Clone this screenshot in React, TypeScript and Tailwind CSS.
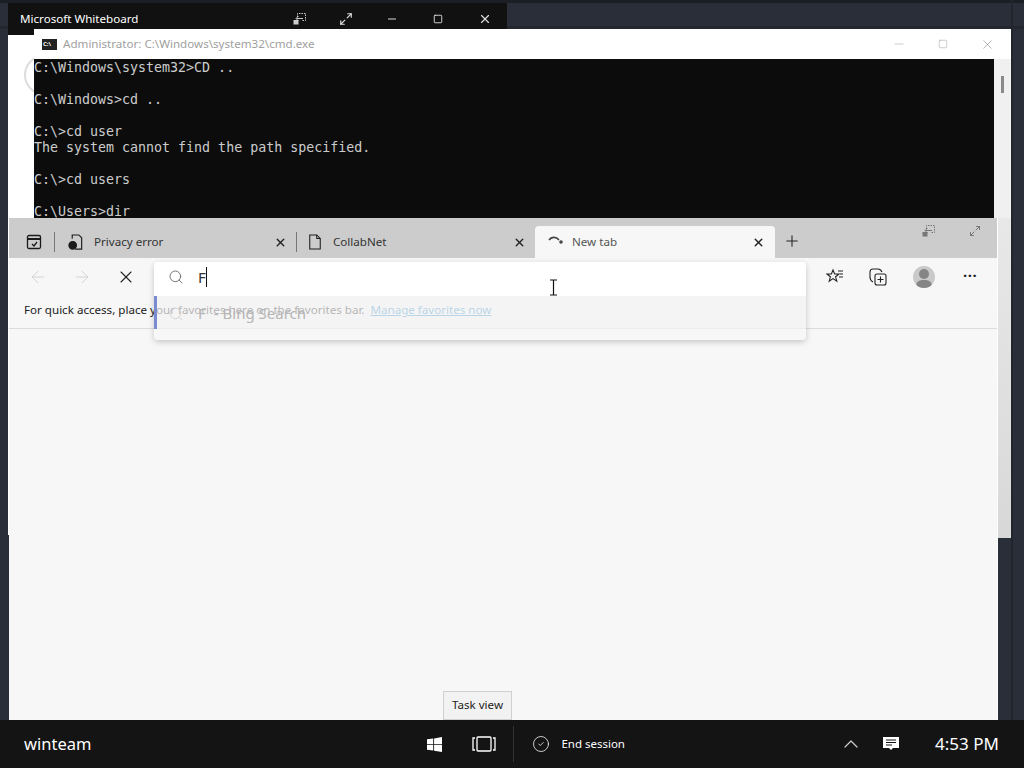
import { ArrowLeft, ArrowRight, ChevronUp, CircleCheck, Maximize2, Minus, Plus, Search, Square, X } from "lucide-react";

const uiFont = { fontFamily: '"Noto Sans", "Open Sans", sans-serif' };

const consoleLines = [
  "C:\\Windows\\system32>CD ..",
  "",
  "C:\\Windows>cd ..",
  "",
  "C:\\>cd user",
  "The system cannot find the path specified.",
  "",
  "C:\\>cd users",
  "",
  "C:\\Users>dir",
];

// little "restore to pinned" glyph used by the remote session bars
function PinBar({ className }: { className?: string }) {
  return (
    <svg viewBox="0 0 14 14" width="14" height="14" fill="none" stroke="currentColor" className={className}>
      <path d="M4.5 5V1.5h8v7H9" strokeDasharray="1.5 1" />
      <path d="M10 6.5H3.5M5.5 4 3 6.5 5.5 9" />
      <rect x="1" y="8.5" width="4" height="3.5" fill="currentColor" />
    </svg>
  );
}

function DocIcon() {
  return (
    <svg viewBox="0 0 16 18" width="14" height="16" fill="none" stroke="#1a1a1a" strokeWidth="1.2">
      <path d="M2 1h8l4 4v12H2z" />
      <path d="M10 1v4h4" />
    </svg>
  );
}

function Tab({ title, icon, width, iconWidth }: { title: string; icon: React.ReactNode; width: string; iconWidth: string }) {
  return (
    <div className={`flex h-[32px] items-center ${width}`}>
      <span className={`flex justify-center ${iconWidth}`}>{icon}</span>
      <span className="text-[11.6px] text-[#333]">{title}</span>
      <X size={13} strokeWidth={2.6} className="ml-auto mr-[9px] text-[#222]" />
    </div>
  );
}

export default function App() {
  return (
    <div className="flex h-[768px] w-[1024px] flex-col overflow-hidden bg-[#2a2e38]" style={uiFont}>
      <div className="relative flex-1">
        <div className="absolute inset-x-0 top-0 h-[3px] bg-[#1c1e26]" />
        <div className="absolute inset-x-0 top-[26px] h-[3px] bg-[#24272f]" />
        <div className="absolute bottom-0 right-[11px] top-0 w-[2px] bg-[#22252c]" />

        {/* Whiteboard window, mostly hidden */}
        <div className="absolute left-[8px] top-[3px] h-[532px] w-[499px] bg-white">
          <div className="flex h-[32px] items-center bg-[#111] text-white">
            <span className="ml-[12px] text-[11.6px]">Microsoft Whiteboard</span>
            <PinBar className="ml-[155px] text-[#ccc]" />
            <Maximize2 size={14} className="ml-[32px] text-[#ddd]" />
            <Minus size={12} className="ml-[33px] text-[#ddd]" />
            <Square size={10} className="ml-[35px] text-[#eee]" />
            <X size={14} className="ml-[35px] text-[#ddd]" />
          </div>
          <div className="ml-[16px] mt-[20px] size-[40px] rounded-full border-2 border-[#ddd]" />
        </div>

        {/* cmd.exe */}
        <div className="absolute left-[34px] top-[29px] h-[509px] w-[977px] bg-linear-to-b from-[#f2f2f2] to-[#d8d8d8]">
          <div className="flex h-[30px] items-center bg-white">
            <span className="ml-[8px] flex h-[11px] w-[15px] items-center bg-[#222] pl-[1px] text-[6px] font-bold leading-none text-white">C:\</span>
            <span className="ml-[6px] text-[11.6px] text-[#a0a0a0]">Administrator: C:\Windows\system32\cmd.exe</span>
            <Minus size={14} strokeWidth={1} className="ml-auto text-[#aaa]" />
            <Square size={10} strokeWidth={1} className="ml-[32px] text-[#888]" />
            <X size={15} strokeWidth={1} className="ml-[32px] mr-[16px] text-[#888]" />
          </div>
          <div className="flex h-[159px]">
            <pre className="w-[960px] overflow-hidden bg-[#0c0c0c] pt-px text-[13.3px] leading-[16px] text-[#cccccc]" style={{ fontFamily: '"DejaVu Sans Mono", monospace' }}>
              {consoleLines.join("\n")}
            </pre>
            <div className="flex w-[17px] justify-center bg-[#f0f0f0] pt-[17px]">
              <div className="h-[17px] w-[3px] bg-[#8a8a8a]" />
            </div>
          </div>
        </div>

        {/* Edge */}
        <div className="absolute left-[9px] top-[218px] flex h-[502px] w-[989px] flex-col border-r border-white bg-[#f7f7f7]">
          <div className="flex h-[40px] items-end bg-[#cccccc]">
            <div className="flex h-[32px] w-[48px] items-center justify-end pr-[2px]">
              <svg viewBox="0 0 16 16" width="16" height="16" fill="none" stroke="#1a1a1a" strokeWidth="1.3" className="mr-[12px]">
                <rect x="1.5" y="1.5" width="13" height="13" rx="1.5" />
                <path d="M1.5 5h13" strokeWidth="2" />
                <path d="m6 10 2 2 3-4" />
              </svg>
              <span className="h-[20px] w-px bg-[#777]" />
            </div>
            <Tab
              title="Privacy error"
              width="w-[239px]"
              iconWidth="w-[37px]"
              icon={
                <svg viewBox="0 0 16 18" width="16" height="17" fill="none" stroke="#1a1a1a" strokeWidth="1.2">
                  <path d="M4 5V1h7l3 3v12H7" />
                  <circle cx="4.5" cy="12" r="4" fill="#1a1a1a" />
                </svg>
              }
            />
            <span className="mb-[6px] h-[20px] w-px bg-[#777]" />
            <Tab title="CollabNet" width="w-[238px]" iconWidth="w-[36px]" icon={<DocIcon />} />
            <div className="flex h-[32px] w-[240px] items-center rounded-t-[4px] bg-[#f7f7f7]">
              <svg viewBox="0 0 16 16" width="16" height="16" fill="none" stroke="#444" strokeWidth="1.6" className="ml-[12px]">
                <path d="M2 6c2-3 7-4 10 0" />
                <circle cx="14" cy="8" r="1" fill="#444" />
              </svg>
              <span className="ml-[9px] text-[11.6px] text-[#555]">New tab</span>
              <X size={13} strokeWidth={2.6} className="ml-auto mr-[10px] text-[#222]" />
            </div>
            <Plus size={18} strokeWidth={1.4} className="mb-[8px] ml-[8px] text-[#222]" />
            <div className="mb-[20px] ml-[121px] flex items-center gap-[33px]">
              <PinBar className="text-[#777]" />
              <Maximize2 size={12} className="text-[#777]" />
            </div>
          </div>

          <div className="flex h-[37px] items-center">
            <ArrowLeft size={20} strokeWidth={1} className="ml-[19px] text-[#ccc]" />
            <ArrowRight size={20} strokeWidth={1} className="ml-[24px] text-[#ccc]" />
            <X size={20} strokeWidth={1.3} className="ml-[24px] text-[#222]" />
            <svg viewBox="0 0 18 18" width="18" height="18" fill="none" stroke="#222" strokeWidth="1.1" className="ml-[690px]">
              <path d="m7 2 1.6 4H13l-3.4 2.8 1.2 4.4L7 10.6 3.2 13.2l1.2-4.4L1 6h4.4z" />
              <path d="M12 3h5M14 6h3M13 9h4" />
            </svg>
            <svg viewBox="0 0 18 18" width="18" height="18" fill="none" stroke="#222" strokeWidth="1.1" className="ml-[25px]">
              <rect x="6" y="6" width="11" height="11" rx="2" />
              <path d="M11.5 8.5v6M8.5 11.5h6" />
              <path d="M4 14C2 13 1 11 1 9V4c0-2 1-3 3-3h5c2 0 3 1 4 3" />
            </svg>
            <span className="relative ml-[26px] size-[22px] overflow-hidden rounded-full bg-[#c9c9c9]">
              <span className="absolute left-[6px] top-[3px] size-[10px] rounded-full bg-[#858585]" />
              <span className="absolute left-[3px] top-[14px] h-[12px] w-[16px] rounded-full bg-[#858585]" />
            </span>
            <span className="ml-[28px] mt-[-2px] text-[15px] font-bold leading-none tracking-[0.5px] text-[#222]">···</span>
          </div>

          <div className="flex h-[34px] items-center border-b border-[#dcdcdc] pb-[3px] pl-[15px] text-[11.6px] text-[#222]">
            <span>For quick access, place your favorites here on the favorites bar.</span>
            <span className="ml-[6px] text-[#2f8fd0] underline">Manage favorites now</span>
          </div>
        </div>

        {/* address bar dropdown, the favorites bar shows through it */}
        <div className="absolute left-[154px] top-[262px] h-[78px] w-[652px] rounded-[4px] shadow-[0_2px_6px_rgba(0,0,0,0.2)]">
          <div className="flex h-[34px] items-center rounded-t-[4px] bg-white pb-[4px]">
            <Search size={16} strokeWidth={1.2} className="ml-[14px] text-[#555]" />
            <span className="ml-[14px] text-[15px] text-[#333]">F</span>
            <span className="h-[20px] w-px bg-[#111]" />
          </div>
          <div className="flex h-[33px] items-center border-l-[3px] border-[#7a8bd0] bg-[#f2f2f2]/70 pt-[2px] text-[15px] text-[#b5b5b5]">
            <Search size={16} strokeWidth={1.2} className="ml-[11px] text-[#ccc]" />
            <span className="ml-[14px]">F</span>
            <span className="ml-[8px]">- Bing Search</span>
          </div>
          <div className="h-[11px] rounded-b-[4px] bg-[#f7f7f7]" />
        </div>

        {/* I-beam pointer */}
        <svg viewBox="0 0 9 17" width="9" height="17" fill="none" stroke="#111" strokeWidth="1.2" className="absolute left-[549px] top-[279px]">
          <path d="M1 1h7M4.5 1v15M1 16h7" />
        </svg>

        {/* Task view tooltip */}
        <div className="absolute bottom-0 left-[443px] flex h-[29px] w-[69px] items-center justify-center border border-[#d0d0d0] bg-[#f2f2f2] pb-[2px] text-[11.6px] text-[#222]">
          Task view
        </div>
      </div>

      {/* remote session taskbar */}
      <div className="flex h-[48px] items-center bg-[#141414] text-white">
        <span className="ml-[24px] text-[16.5px]">winteam</span>
        <svg viewBox="0 0 14 14" width="15" height="15" fill="#fff" className="ml-[336px]">
          <path d="M0 2.2 5.8 1.4v5.3H0zM6.6 1.3 14 0v6.7H6.6zM0 7.4h5.8v5.3L0 11.9zM6.6 7.4H14V14l-7.4-1.1z" />
        </svg>
        <svg viewBox="0 0 24 16" width="24" height="16" fill="none" stroke="#fff" strokeWidth="1.3" className="ml-[30px]">
          <rect x="5" y="1" width="14" height="14" rx="1" />
          <path d="M3 2H1v12h2M21 2h2v12h-2" />
        </svg>
        <span className="ml-[17px] h-[36px] w-px bg-[#333]" />
        <CircleCheck size={18} strokeWidth={1} className="ml-[18px]" />
        <span className="ml-[11px] text-[11.5px]">End session</span>
        <ChevronUp size={24} strokeWidth={1.2} className="ml-[214px] text-[#ccc]" />
        <svg viewBox="0 0 16 16" width="16" height="16" className="ml-[20px]">
          <path d="M0 1h16v11h-6l-2 2-2-2H0z" fill="#fff" />
          <path d="M3 4h10M3 6.5h10M3 9h6" stroke="#141414" strokeWidth="1" />
        </svg>
        <span className="ml-[36px] text-[17px]">4:53 PM</span>
      </div>
    </div>
  );
}
